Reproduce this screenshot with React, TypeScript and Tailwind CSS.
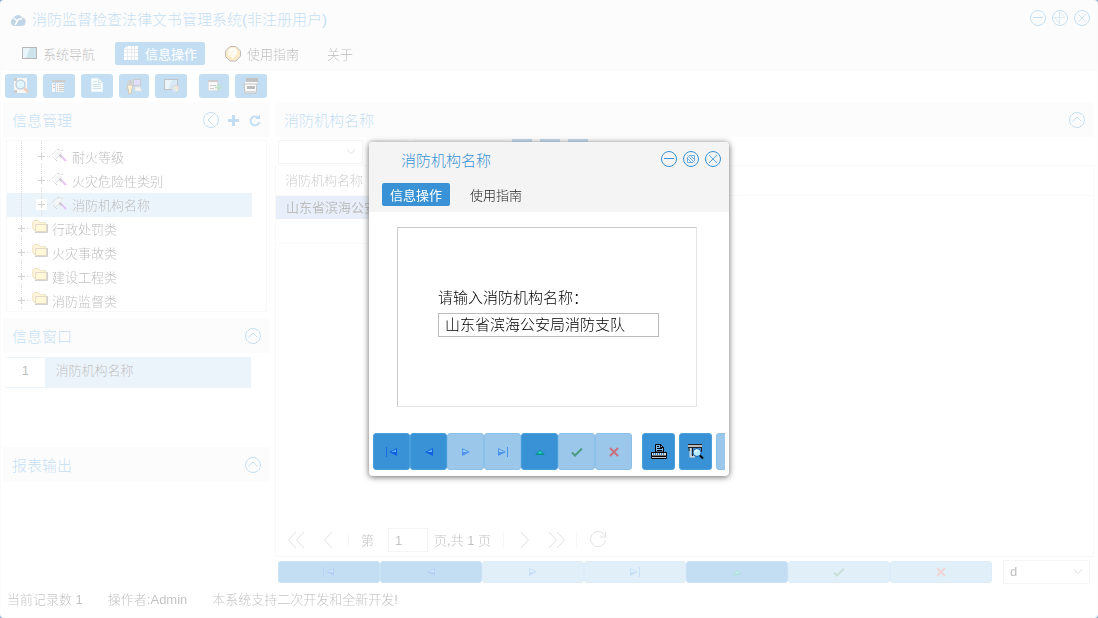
import type { ReactNode } from 'react';
import clsx from 'clsx';

const menus = [
  { name: '系统导航', icon: 'screen' },
  { name: '信息操作', icon: 'grid', active: true },
  { name: '使用指南', icon: 'help' },
  { name: '关于' },
];

const tools = [
  { name: '查询', icon: 'search', size: 'w-8' },
  { name: '列表', icon: 'list', size: 'w-8' },
  { name: '文书', icon: 'doc', size: 'w-8' },
  { name: '用户', icon: 'user', size: 'w-[30px]' },
  { name: '显示', icon: 'monitor', size: 'w-8' },
  { name: '新增', icon: 'add', size: 'w-[30px] ml-1.5' },
  { name: '打印', icon: 'printer', size: 'w-8' },
];

const tree = [
  { name: '耐火等级', level: 2 },
  { name: '火灾危险性类别', level: 2 },
  { name: '消防机构名称', level: 2, selected: true },
  { name: '行政处罚类', level: 1 },
  { name: '火灾事故类', level: 1 },
  { name: '建设工程类', level: 1 },
  { name: '消防监督类', level: 1 },
];

const navButtons = [
  { name: '首条', icon: 'first' },
  { name: '上一条', icon: 'prev' },
  { name: '下一条', icon: 'next', disabled: true },
  { name: '末条', icon: 'last', disabled: true },
  { name: '编辑', icon: 'up' },
  { name: '保存', icon: 'check', disabled: true },
  { name: '取消', icon: 'cross', disabled: true },
];

const drawings: Record<string, ReactNode> = {
  screen: (
    <>
      <rect x="1.500" y="1.500" width="14" height="11" fill="#5aa5c4" stroke="#111" />
      <path d="M2 2h7L5 12H2z" fill="#b4dcea" />
    </>
  ),
  grid: (
    <>
      <path d="M4 0h11v14H1V3z" fill="#fff" />
      <path d="M1 3.500h14M1 6.500h14M1 10.500h14M4.500 0v14M8.500 0v14M11.500 0v14" stroke="#a9bccb" fill="none" />
    </>
  ),
  help: (
    <>
      <path d="M5 .5h6l4.500 4.500v5L11 15H5L.5 10.500V5z" fill="#f5b942" stroke="#222" />
      <circle cx="7.500" cy="6.500" r="5" fill="#ffe4a0" />
      <path d="M5.500 5.500c0-3 5-3 5 0 0 2-2.500 2-2.500 3.500M8 10.500v1.500" stroke="#fff" strokeWidth="2" fill="none" />
    </>
  ),
  search: (
    <>
      <path d="M1 0h13v15H1z" fill="#e8e4da" />
      <path d="M1 0h3v3H1zM1 12h3v3H1z" fill="#555" />
      <circle cx="7.500" cy="6.500" r="4.500" fill="#9fe0f5" stroke="#3a6e94" strokeWidth="1.500" />
      <path d="M11 10l4 4" stroke="#d0552b" strokeWidth="2.500" />
    </>
  ),
  list: (
    <>
      <path d="M1 2h13v2H1z" fill="#555" />
      <path d="M1 5h3v9H1zM5 5h8v9H5z" fill="#ddd" />
      <path d="M2 6.500h2M2 9.500h2M6 6.500h1M6 8.500h1M6 10.500h1M6 12.500h1" stroke="#7a3b2b" />
      <path d="M8 6.500h5M8 8.500h5M8 10.500h5M8 12.500h5" stroke="#555" />
    </>
  ),
  doc: (
    <>
      <path d="M2.500.5h7l4 4v9h-11z" fill="#e9f7fb" stroke="#b6dcea" />
      <path d="M9.500.5v4h4M4 3.500h4M4 6.500h8M4 8.500h8M4 10.500h8" stroke="#5ba5bf" fill="none" />
    </>
  ),
  user: (
    <>
      <rect x="7.500" y="1.500" width="7" height="6" fill="#9a8ff0" stroke="#555" />
      <path d="M9 9h5l2 4H9z" fill="#ddd" stroke="#999" />
      <circle cx="4" cy="4" r="2.500" fill="#666" />
      <path d="M1.500 7h5v4H5.500v4.500h-3V11h-1z" fill="#f0c878" stroke="#7a551b" />
    </>
  ),
  monitor: (
    <>
      <rect x="1.500" y="1.500" width="13" height="10" fill="#7fb9dd" stroke="#333" />
      <path d="M2 2h7l-4 9H2z" fill="#b7dcef" />
      <circle cx="12.500" cy="11" r="3.500" fill="#8de08d" stroke="#7560a8" />
      <path d="M12.500 11V7.500A3.500 3.500 0 0116 11z" fill="#f28a8a" />
      <path d="M12.500 11H9a3.500 3.500 0 003.500 3.500z" fill="#7f9bf0" />
    </>
  ),
  add: (
    <>
      <path d="M2.500 2.500h9v10h-9z" fill="#e9e9e9" stroke="#999" />
      <path d="M2 2h10v2H2zM4 7h6v1H4zM4 10h4v1H4z" fill="#555" />
      <path d="M12.500 6v7M9 9.500h7" stroke="#2c9c5c" strokeWidth="2" />
    </>
  ),
  printer: (
    <>
      <path d="M3 0h12v4H3z" fill="#333" />
      <path d="M2 4h12v2H2z" fill="#eee" />
      <path d="M1 6h13l-1 9H2z" fill="#f2f2f2" stroke="#333" />
      <path d="M4 8h8v3H4z" fill="#222" />
      <path d="M3 13.500h9" stroke="#777" />
    </>
  ),
  first: (
    <>
      <path d="M2.500 3v10" stroke="#1f6be0" />
      <path d="M13 4v8L5 8z" fill="#0d5fe0" />
      <path d="M12 5.500V8H7z" fill="#67b4ff" />
    </>
  ),
  prev: (
    <>
      <path d="M12 4v8L4 8z" fill="#0d5fe0" />
      <path d="M11 5.500V8H6z" fill="#67b4ff" />
    </>
  ),
  next: (
    <>
      <path d="M4 4v8l8-4z" fill="#4b94ee" />
      <path d="M5 5.500V8h5z" fill="#9fd2ff" />
    </>
  ),
  last: (
    <>
      <path d="M3 4v8l8-4z" fill="#4b94ee" />
      <path d="M4 5.500V8h5z" fill="#9fd2ff" />
      <path d="M12.500 3v10" stroke="#4b94ee" />
    </>
  ),
  up: (
    <>
      <path d="M3 11h10L8 6z" fill="#0b8f8c" />
      <path d="M5.500 9.500h5L8 7z" fill="#25dccb" />
    </>
  ),
  check: <path d="M3 8.500l3 3 7-7" stroke="#4b9c83" strokeWidth="2" fill="none" />,
  cross: <path d="M4 4l8 8M12 4l-8 8" stroke="#c9707a" strokeWidth="2" fill="none" />,
  print: (
    <>
      <path d="M4.500 8V.5h5l3 3V8z" fill="#7fbbe6" stroke="#000" />
      <path d="M9.500.5v3h3M6 2.500h2M6 4.500h5M6 6.500h5" stroke="#000" fill="none" />
      <path d="M.5 8.500h15V12H.5z" fill="#d8dde2" stroke="#000" />
      <path d="M2 10h12" stroke="#3a7fb5" strokeDasharray="1 1" strokeWidth="2" />
      <path d="M.5 12.500h15v2H.5z" fill="#c4c8cc" stroke="#000" />
    </>
  ),
  preview: (
    <>
      <path d="M0 1h14v2.500H0z" fill="#bbb" />
      <path d="M0 .5h14M0 3.500h14" stroke="#222" />
      <path d="M2.500 4v8.500H7" stroke="#d5d5d5" strokeWidth="2" fill="none" />
      <path d="M1 4v3M4.500 4v8M13.500 4v4" stroke="#222" fill="none" />
      <circle cx="9" cy="8.500" r="4" fill="#b6ecff" stroke="#1c5ea8" />
      <path d="M12 11.500l3 3" stroke="#000" strokeWidth="2" />
      <path d="M7 7.500l2-1.500" stroke="#fff" strokeWidth="1.500" />
    </>
  ),
  folder: (
    <>
      <path d="M.5 2.500l2-2h4l2 2h5v8h-11l-2-2z" fill="#f8dc80" stroke="#c9a040" />
      <path d="M3.500 4.500h11v7h-11z" fill="#ffec80" stroke="#a07c3c" />
      <path d="M15.500 4v8.500H3" stroke="#666" fill="none" />
    </>
  ),
  wand: (
    <>
      <path d="M2 7l5-5 3 3-5 6z" fill="#ddd" />
      <path d="M0 6.500L6.500.5M3 12l7-7M6 1.500l6 1M5 13L1 9" stroke="#777" strokeDasharray="2 1" fill="none" />
      <path d="M8 7l6 6" stroke="#a23be0" strokeWidth="2" />
      <path d="M7 6l1 4 2-2z" fill="#444" />
    </>
  ),
};

function Icon({ name, className = 'size-4' }: { name: string; className?: string }) {
  return (
    <svg viewBox="0 0 16 16" className={clsx('shrink-0', className)} aria-hidden="true">
      {drawings[name]}
    </svg>
  );
}

const circles: Record<string, ReactNode> = {
  left: <path d="M10.500 4.500L6 9l4.500 4.500" />,
  up: <path d="M4.500 10.500L9 6l4.500 4.500" />,
  min: <path d="M4 8.500h10" />,
  max: <path d="M8.500 3v12M3 8.500h11M8.500 3L14 8.500M3 8.500L8.500 14" strokeOpacity="0.6" />,
  restore: <path d="M5.500 7v5.500H11M7 5.500h5.500V11M5.500 5.500l7 7M8.500 5.500l4 4M5.500 8.500l4 4" strokeOpacity="0.7" />,
  close: <path d="M5 5l8 8M13 5l-8 8" strokeOpacity="0.8" />,
};

function CircleButton({ shape, label }: { shape: string; label: string }) {
  return (
    <button type="button" aria-label={label} className="size-[18px] shrink-0 text-[#3892d5]">
      <svg viewBox="0 0 18 18" className="size-[18px]" fill="none" stroke="currentColor">
        <circle cx="9" cy="9" r="7.500" />
        {circles[shape]}
      </svg>
    </button>
  );
}

function PanelHeader({ title, children }: { title: string; children: ReactNode }) {
  return (
    <div className="flex h-[35px] shrink-0 items-center justify-between bg-[#f5f5f5] pr-2 pl-[9px]">
      <h2 className="pt-0.5 text-[15px] text-[#3892d5]">{title}</h2>
      <div className="flex items-center gap-[5px]">{children}</div>
    </div>
  );
}

function Menu({ items }: { items: { name: string; icon?: string; active?: boolean }[] }) {
  return (
    <nav className="flex gap-3">
      {items.map((item) => (
        <button
          key={item.name}
          type="button"
          className={clsx(
            'flex h-[23px] items-center gap-1.5 rounded-xs px-2',
            item.active ? 'bg-[#3892d5] font-normal text-white' : 'text-[#222]',
          )}
        >
          {item.icon && <Icon name={item.icon} />}
          <span className="pt-0.5">{item.name}</span>
        </button>
      ))}
    </nav>
  );
}

// One 20px column of the tree's guide lines
function Guide({ expander }: { expander?: boolean }) {
  return (
    <svg viewBox="0 0 20 24" className="h-6 w-5 shrink-0" fill="none" aria-hidden="true">
      <path d="M10.500 0v24" stroke="#888" strokeDasharray="1 1" />
      {expander && (
        <>
          <path d="M16 11.500h4" stroke="#888" strokeDasharray="1 1" />
          <path d="M5 6h11v11H5z" fill="#fff" />
          <path d="M7 11.500h7M10.500 8v7" stroke="#666" />
        </>
      )}
    </svg>
  );
}

function NavButtons({ tall }: { tall?: boolean }) {
  return (
    <>
      {navButtons.map((b) => (
        <button
          key={b.name}
          type="button"
          aria-label={b.name}
          disabled={b.disabled}
          className={clsx(
            'flex items-center justify-center rounded-[3px] border',
            tall ? 'h-[37px] w-[37px] shrink-0' : 'h-[22px] flex-1',
            b.disabled ? 'border-[#8cc0e6] bg-[#9bc8ea]' : 'border-[#4a9fdb] bg-[#3892d5]',
          )}
        >
          <Icon name={b.icon} />
        </button>
      ))}
    </>
  );
}

function DropDown({ label, options, className }: { label: string; options: string[]; className: string }) {
  return (
    <div className={clsx('relative h-6 border border-[#ddd]', className)}>
      <select aria-label={label} className="h-full w-full appearance-none bg-white pl-1.5 text-[13px] text-[#222]">
        {options.map((o) => (
          <option key={o}>{o}</option>
        ))}
      </select>
      <svg viewBox="0 0 10 6" className="pointer-events-none absolute top-2 right-1.5 h-1.5 w-2.5" fill="none" stroke="#888">
        <path d="M1 .5l4 4 4-4" />
      </svg>
    </div>
  );
}

function PagerButton({ label, d, className }: { label: string; d: string; className: string }) {
  return (
    <button type="button" aria-label={label} className={className}>
      <svg viewBox="0 0 18 18" className="size-[18px]" fill="none" stroke="#999">
        <path d={d} />
      </svg>
    </button>
  );
}

function Sidebar() {
  return (
    <aside className="flex w-[267px] shrink-0 flex-col">
      <PanelHeader title="信息管理">
        <CircleButton shape="left" label="收起" />
        <button type="button" aria-label="添加">
          <svg viewBox="0 0 16 16" className="size-4" stroke="#3892d5" strokeWidth="3">
            <path d="M8.500 3v11M3 8.500h11" />
          </svg>
        </button>
        <button type="button" aria-label="刷新">
          <svg viewBox="0 0 16 16" className="size-4" fill="none" stroke="#3892d5" strokeWidth="2">
            <path d="M12 5.500A4.500 4.500 0 1013.500 10" />
            <path d="M9 7h5V2.500z" fill="#3892d5" stroke="none" />
          </svg>
        </button>
      </PanelHeader>

      {/* Tree */}
      <div className="mx-[3px] mt-[3px] h-[172px] overflow-hidden border border-[#e8e8e8]">
        <div className="flex h-1 overflow-hidden pl-1">
          <Guide />
          <Guide />
        </div>
        <ul role="tree">
          {tree.map((node) => (
            <li
              key={node.name}
              role="treeitem"
              className={clsx('mr-3.5 flex h-6 items-center pl-1 text-[#222]', node.selected && 'bg-[#c0daf2]')}
            >
              {node.level === 2 && <Guide />}
              <Guide expander />
              <span className="flex w-[21px] shrink-0 pb-0.5 pl-px">
                <Icon name={node.level === 2 ? 'wand' : 'folder'} />
              </span>
              <span className="pt-0.5">{node.name}</span>
            </li>
          ))}
        </ul>
      </div>

      <div className="mt-1.5 flex h-[129px] flex-col">
        <PanelHeader title="信息窗口">
          <CircleButton shape="up" label="折叠信息窗口" />
        </PanelHeader>
        <table className="mt-1 mr-[19px] ml-[3px]">
          <tbody>
            <tr className="h-[30px] border-y border-[#c0daf2] bg-[#c0daf2] text-[#222]">
              <td className="w-[39px] border-r border-[#c0daf2] bg-white pb-1 text-center">1</td>
              <td className="pb-1 pl-2.5">消防机构名称</td>
            </tr>
          </tbody>
        </table>
      </div>

      <PanelHeader title="报表输出">
        <CircleButton shape="up" label="折叠报表输出" />
      </PanelHeader>
    </aside>
  );
}

function Records() {
  return (
    <main className="flex min-w-0 flex-1 flex-col">
      <PanelHeader title="消防机构名称">
        <CircleButton shape="up" label="折叠" />
      </PanelHeader>

      <div className="mt-0.5 flex h-[26px] items-center gap-2 pl-[3px]">
        <DropDown label="字段" options={['']} className="w-[85px]" />
        <DropDown label="条件" options={['']} className="w-9" />
        <input aria-label="查询内容" className="h-6 w-[89px] border border-[#ddd]" />
        <button type="button" aria-label="查询" className="h-[26px] w-5 bg-[#3892d5]" />
        <button type="button" aria-label="添加条件" className="h-[26px] w-5 bg-[#3892d5]" />
        <button type="button" aria-label="清除" className="h-[26px] w-5 bg-[#3892d5]" />
      </div>

      <div className="flex flex-1 flex-col border border-[#eaeaea]">
        <table className="w-full text-left">
          <thead>
            <tr className="h-[29px] border-b border-[#eee] text-[#555]">
              <th className="w-1/2 pt-0.5 pl-[9px] font-light">消防机构名称</th>
              <th />
            </tr>
          </thead>
          <tbody>
            <tr className="h-6 text-[#222]">
              <td className="bg-[#b2c8ef] pt-0.5 pl-2.5 font-normal">山东省滨海公安局消防支队</td>
              <td />
            </tr>
            <tr className="h-6">
              <td className="border-b border-[#eee]" />
              <td />
            </tr>
          </tbody>
        </table>

        {/* Pagination */}
        <div className="mt-auto mb-1 flex h-6 items-center pl-[11px] text-[#333]">
          <PagerButton label="首页" d="M9 1L1.500 9 9 17M17 1L9.500 9l7.500 8" className="w-[35px]" />
          <PagerButton label="上一页" d="M10 1L2.500 9l7.500 8" className="w-[26px]" />
          <span className="h-3.5 w-px bg-[#ddd]" />
          <label htmlFor="page" className="ml-3 pt-0.5">第</label>
          <input id="page" defaultValue="1" className="mr-1.5 ml-3.5 h-6 w-10 border border-[#ddd] pl-1.5 text-[13px]" />
          <span className="pt-0.5">页,共 1 页</span>
          <span className="ml-3 h-3.5 w-px bg-[#ddd]" />
          <PagerButton label="下一页" d="M1 1l7.500 8L1 17" className="ml-4 w-7" />
          <PagerButton label="末页" d="M1 1l7.500 8L1 17M9 1l7.500 8L9 17" className="w-7" />
          <span className="h-3.5 w-px bg-[#ddd]" />
          <PagerButton label="刷新" d="M16 5A7.500 7.500 0 1016.500 9.500M16.500 1v5H11" className="ml-3" />
        </div>
      </div>

      <div className="flex h-[27px] items-center pt-1 pr-1 pb-px pl-[3px]">
        <div className="flex flex-1">
          <NavButtons />
        </div>
        <DropDown label="模式" options={['d']} className="ml-[11px] w-[87px]" />
      </div>
    </main>
  );
}

function RecordDialog() {
  return (
    <div className="fixed inset-0 flex items-center justify-center">
      <section
        role="dialog"
        aria-label="消防机构名称"
        className="flex w-[360px] flex-col rounded-sm bg-white pb-1.5 shadow-[0_1px_6px_#666]"
      >
        <header className="rounded-t-sm bg-[#f4f4f4] pb-1.5">
          <div className="flex h-[35px] items-center justify-between pr-[7px] pl-8">
            <h2 className="pt-0.5 text-[15px] text-[#3892d5]">消防机构名称</h2>
            <div className="flex gap-1 pb-0.5">
              <CircleButton shape="min" label="最小化" />
              <CircleButton shape="restore" label="还原" />
              <CircleButton shape="close" label="关闭" />
            </div>
          </div>
          <div className="pt-1.5 pl-[13px]">
            <Menu items={[{ name: '信息操作', active: true }, { name: '使用指南' }]} />
          </div>
        </header>

        <form className="mx-7 mt-[15px] mr-8 mb-[26px] flex h-[180px] flex-col border border-[#ccc] border-r-[#e5e5e5] border-b-[#e5e5e5] pt-[58px] pr-[37px] pl-10 text-[15px] text-black">
          <label htmlFor="org" className="leading-6">请输入消防机构名称：</label>
          <input
            id="org"
            defaultValue="山东省滨海公安局消防支队"
            className="mt-[3px] h-6 border border-[#bbb] px-1.5 pb-1"
          />
        </form>

        <div className="mx-1 flex overflow-hidden">
          <NavButtons tall />
          <div className="ml-2.5 flex shrink-0 gap-1">
            {['print', 'preview'].map((name) => (
              <button
                key={name}
                type="button"
                aria-label={name === 'print' ? '打印' : '预览'}
                className="flex h-[37px] w-[33px] items-center justify-center rounded-[3px] border border-[#4a9fdb] bg-[#3892d5]"
              >
                <Icon name={name} />
              </button>
            ))}
            <button type="button" aria-label="更多" disabled className="h-[37px] w-[33px] rounded-[3px] border border-[#8cc0e6] bg-[#9bc8ea]" />
          </div>
        </div>
      </section>
    </div>
  );
}

export default function App() {
  return (
    <div className="bg-[#8fabd0] font-['Liberation_Sans','Noto_Sans_CJK_SC',sans-serif] text-[13px] leading-5 font-light">
      <div className="rounded bg-white">
        <div className="flex min-h-screen flex-col rounded border border-[#f0f0f0] opacity-30">
          <header className="bg-[#f5f5f5] pb-1.5">
            <div className="flex h-[37px] items-center pr-[6px] pl-2">
              <svg viewBox="0 0 18 14" className="mr-[5px] h-3.5 w-[18px]" aria-hidden="true">
                <path d="M5 13a4 4 0 01-1-7.500A5 5 0 0113 4.500 4.300 4.300 0 0113 13z" fill="#2d72a8" />
                <path d="M5 5l3 3 2-2h3M8.500 8L6 12" stroke="#fff" strokeWidth="1.500" fill="none" />
              </svg>
              <h1 className="text-[15px] text-[#3892d5]">消防监督检查法律文书管理系统(非注册用户)</h1>
              <div className="ml-auto flex gap-1 pb-[3px]">
                <CircleButton shape="min" label="最小化窗口" />
                <CircleButton shape="max" label="最大化窗口" />
                <CircleButton shape="close" label="关闭窗口" />
              </div>
            </div>
            <div className="pt-1 pl-3">
              <Menu items={menus} />
            </div>
          </header>

          <div className="flex gap-1.5 px-1 pt-[3px] pb-1">
            {tools.map((tool) => (
              <button
                key={tool.name}
                type="button"
                aria-label={tool.name}
                className={clsx('flex h-6 items-center justify-center rounded-[3px] bg-[#3892d5]', tool.size)}
              >
                <Icon name={tool.icon} />
              </button>
            ))}
          </div>

          <div className="flex flex-1 gap-[5px] pr-[3px] pl-0.5">
            <Sidebar />
            <Records />
          </div>

          <footer className="flex h-[33px] items-center gap-[25px] pb-0.5 pl-1.5 text-[#333]">
            <span>当前记录数 1</span>
            <span>操作者:Admin</span>
            <span>本系统支持二次开发和全新开发!</span>
          </footer>
        </div>
      </div>
      <RecordDialog />
    </div>
  );
}
